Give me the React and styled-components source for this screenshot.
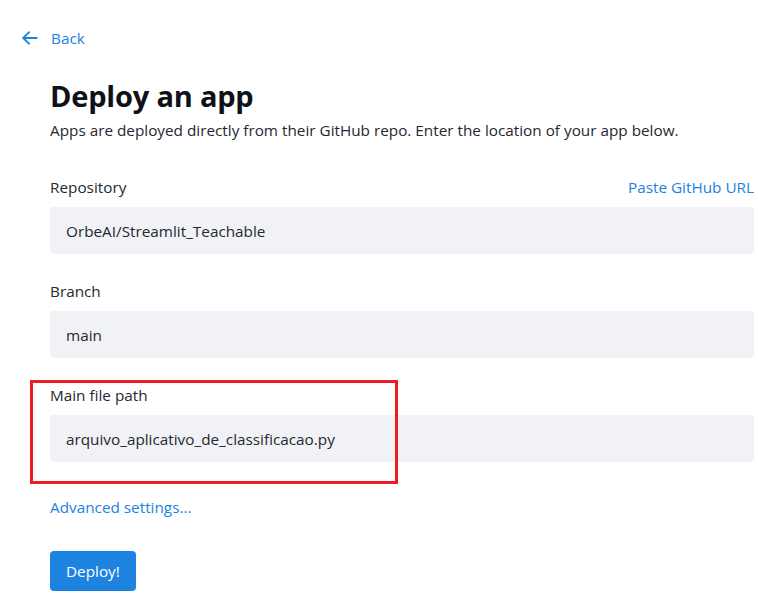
import React from 'react';
import styled, { createGlobalStyle } from 'styled-components';

const GlobalStyle = createGlobalStyle`
  body {
    margin: 0;
    background: #ffffff;
    font-family: "Open Sans", "Noto Sans", sans-serif;
    color: #262730;
  }
`;

const Page = styled.div`
  width: 758px;
  height: 615px;
  position: relative;
  overflow: hidden;
`;

const BackLink = styled.a`
  display: flex;
  align-items: center;
  gap: 11px;
  padding: 26px 0 0 20px;
  height: 24px;
  color: #1c83e1;
  font-size: 15.3px;
  text-decoration: none;
  cursor: pointer;
`;

const Content = styled.div`
  padding: 26px 4px 0 50px;
`;

const Title = styled.h1`
  margin: 0;
  font-size: 29px;
  font-weight: 700;
  line-height: 40px;
  color: #0e1117;
  letter-spacing: -0.2px;
`;

const Subtitle = styled.p`
  margin: 3px 0 0;
  font-size: 15.3px;
  line-height: 22px;
  color: #262730;
`;

const Form = styled.div`
  margin-top: 34px;
  display: flex;
  flex-direction: column;
  gap: 25px;
`;

const Field = styled.div`
  display: flex;
  flex-direction: column;
  gap: 8px;
`;

const LabelRow = styled.div`
  display: flex;
  justify-content: space-between;
  align-items: center;
  height: 24px;
`;

const Label = styled.label`
  font-size: 15.3px;
  color: #262730;
`;

const TextLink = styled.a`
  font-size: 15.3px;
  color: #1c83e1;
  text-decoration: none;
  cursor: pointer;
`;

const Input = styled.div`
  height: 47px;
  display: flex;
  align-items: center;
  padding: 0 16px;
  background: #f0f2f6;
  border-radius: 4px;
  font-size: 15.3px;
  color: #262730;
`;

const Advanced = styled(TextLink)`
  display: block;
  margin-top: 33px;
  line-height: 24px;
`;

const DeployButton = styled.button`
  margin-top: 32px;
  height: 40px;
  padding: 0 16px;
  background: #1c83e1;
  color: #ffffff;
  border: none;
  border-radius: 4px;
  font-family: inherit;
  font-size: 15.3px;
  cursor: pointer;
`;

const Highlight = styled.div`
  position: absolute;
  left: 30px;
  top: 380px;
  width: 368px;
  height: 104px;
  box-sizing: border-box;
  border: 3.5px solid #ec1c24;
  pointer-events: none;
`;

const fields = [
  { label: 'Repository', value: 'OrbeAI/Streamlit_Teachable', link: 'Paste GitHub URL' },
  { label: 'Branch', value: 'main' },
  { label: 'Main file path', value: 'arquivo_aplicativo_de_classificacao.py' },
];

const App = () => (
  <Page>
    <GlobalStyle />
    <BackLink>
      <svg width="20" height="20" viewBox="0 0 24 24" fill="none" stroke="#1c83e1" strokeWidth="2.2" strokeLinecap="round" strokeLinejoin="round">
        <path d="M20 12H4" />
        <path d="M11 5l-7 7 7 7" />
      </svg>
      Back
    </BackLink>
    <Content>
      <Title>Deploy an app</Title>
      <Subtitle>Apps are deployed directly from their GitHub repo. Enter the location of your app below.</Subtitle>
      <Form>
        {fields.map((f) => (
          <Field key={f.label}>
            <LabelRow>
              <Label>{f.label}</Label>
              {f.link && <TextLink>{f.link}</TextLink>}
            </LabelRow>
            <Input>{f.value}</Input>
          </Field>
        ))}
      </Form>
      <Advanced>Advanced settings...</Advanced>
      <DeployButton>Deploy!</DeployButton>
    </Content>
    <Highlight />
  </Page>
);

export default App;
